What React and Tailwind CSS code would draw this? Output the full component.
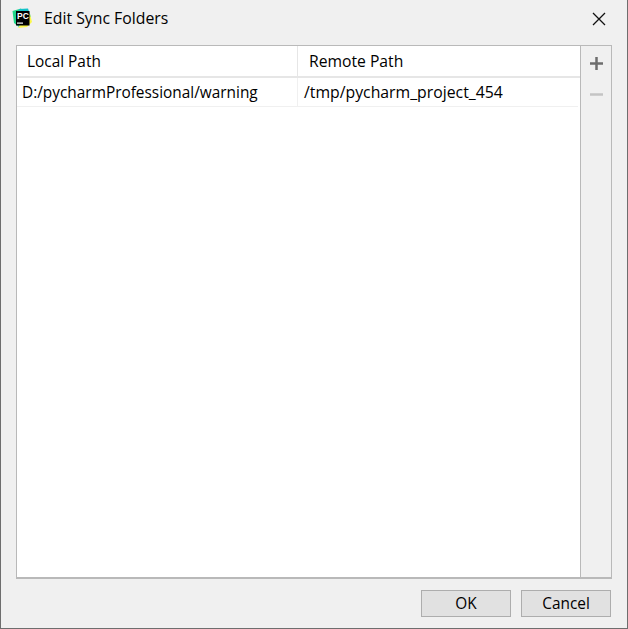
const FONT = 'font-["Open_Sans","Noto_Sans",sans-serif]';

function PcLogo() {
  return (
    <svg width="20" height="20" viewBox="0 0 20 20" className="shrink-0">
      <path d="M0.5 3 L9 0.5 L12 5 L7 19 L2 15 Z" fill="#21d789" />
      <path d="M7 1 L16 0.5 L19 9 L14 12 L7 6 Z" fill="#12c2c9" />
      <path d="M12 12 L18 6 L20 14 L15 19 L6 20 Z" fill="#fcf84a" />
      <rect x="4" y="3" width="13.5" height="14.5" fill="#000" />
      <text x="5" y="10.5" fill="#fff" fontSize="8.5" fontWeight="700" fontFamily="Liberation Sans, sans-serif">PC</text>
      <rect x="5" y="14.5" width="6" height="1.2" fill="#fff" />
    </svg>
  );
}

export default function App() {
  return (
    <div className={`${FONT} w-[628px] h-[629px] flex flex-col bg-[#f0f0f0] border-l border-r border-b border-[#6e6e6e] text-[15.4px] text-black`}>
      <div className="h-[45px] flex items-center pl-[11px] pr-[21px] pb-[9px]">
        <PcLogo />
        <span className="ml-[12px] text-[15.8px] leading-5">Edit Sync Folders</span>
        <svg width="14" height="14" viewBox="0 0 14 14" className="ml-auto mt-[1px]" stroke="#111" strokeWidth="1.3" fill="none">
          <path d="M1 1 L13 13 M13 1 L1 13" />
        </svg>
      </div>

      <div className="mx-[15px] h-[534px] flex bg-white border border-b-2 border-[#b9b9b9]">
        <div className="flex-1 flex flex-col">
          <div className="h-[32px] flex items-center border-b-2 border-[#e6e6e6]">
            <div className="w-[281px] h-full pl-[10px] pt-[2px] flex items-center border-r border-[#e6e6e6]">Local Path</div>
            <div className="flex-1 pl-[11px] pt-[1px] text-[15.7px]">Remote Path</div>
          </div>
          <div className="h-[29px] flex items-center border-b border-[#f0f0f0] mr-[2px]">
            <div className="w-[281px] h-full pl-[5px] pt-[1px] flex items-center border-r border-[#f0f0f0]">D:/pycharmProfessional/warning</div>
            <div className="flex-1 pl-[6px] pt-[1px] text-[15.8px]">/tmp/pycharm_project_454</div>
          </div>
        </div>
        <div className="w-[31px] bg-[#f0f0f0] border-l border-[#b9b9b9] flex flex-col items-center pt-[11px] gap-[18px]">
          <svg width="13" height="13" viewBox="0 0 13 13" fill="#6e6e6e">
            <path d="M5.25 0 H7.75 V5.25 H13 V7.75 H7.75 V13 H5.25 V7.75 H0 V5.25 H5.25 Z" />
          </svg>
          <svg width="13" height="13" viewBox="0 0 13 13" fill="#c4c4c4">
            <rect x="0" y="5.25" width="13" height="2.5" />
          </svg>
        </div>
      </div>

      <div className="flex-1 flex justify-end items-start gap-[10px] pt-[11px] pr-[16px]">
        <button className="w-[90px] h-[27px] leading-none bg-[#e1e1e1] border border-[#adadad]">OK</button>
        <button className="w-[90px] h-[27px] leading-none bg-[#e1e1e1] border border-[#adadad]">Cancel</button>
      </div>
    </div>
  );
}
